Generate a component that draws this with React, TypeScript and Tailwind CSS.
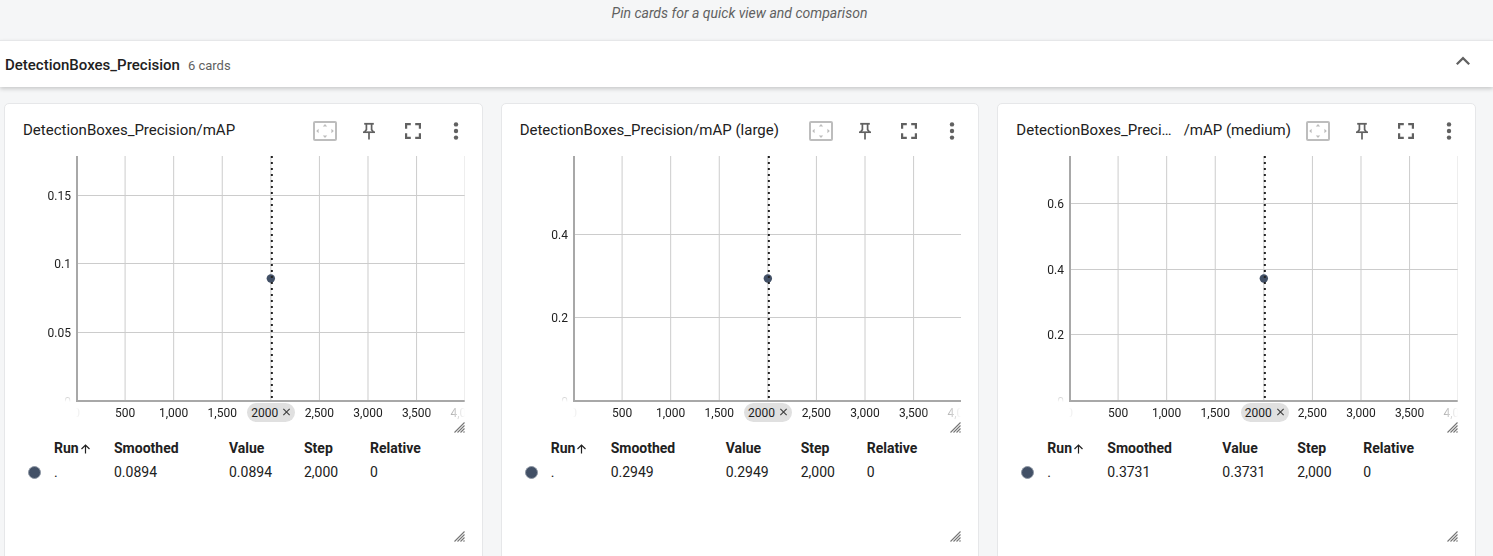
import React from "react";
import clsx from "clsx";

type Tick = { label: string; y: number };
type Card = { id: string; title: string; tail: string; value: string; ticks: Tick[]; compactTitle?: boolean };

const PLOT_HEIGHT = 246;
const POINT_Y = 123;

const CARDS: Card[] = [
  {
    id: "map",
    title: "DetectionBoxes_Precision",
    tail: "/mAP",
    value: "0.0894",
    ticks: [
      { label: "0.15", y: 39 },
      { label: "0.1", y: 107 },
      { label: "0.05", y: 176 },
    ],
  },
  {
    id: "map-large",
    title: "DetectionBoxes_Precision",
    tail: "/mAP (large)",
    value: "0.2949",
    ticks: [
      { label: "0.4", y: 78 },
      { label: "0.2", y: 161 },
    ],
  },
  {
    id: "map-medium",
    title: "DetectionBoxes_Precision",
    tail: "/mAP (medium)",
    value: "0.3731",
    compactTitle: true,
    ticks: [
      { label: "0.6", y: 47 },
      { label: "0.4", y: 113 },
      { label: "0.2", y: 178 },
    ],
  },
];

const STEPS = ["0", "500", "1,000", "1,500", "", "2,500", "3,000", "3,500", "4,000"];

function FitIcon() {
  return (
    <svg width="24" height="20" viewBox="0 0 24 20" aria-hidden="true">
      <rect x="1" y="1" width="22" height="18" rx="1" fill="none" stroke="#bdbdbd" strokeWidth="2" />
      <path d="M12 3l2.2 2.6H9.8zM12 17l2.2-2.6H9.8zM3.2 10l2.4-2.2v4.4zM20.8 10l-2.4-2.2v4.4z" fill="#bdbdbd" />
    </svg>
  );
}

function PinIcon() {
  return (
    <svg width="24" height="24" viewBox="0 0 24 24" fill="none" stroke="#616161" aria-hidden="true">
      <path d="M7.2 4.8h9.6" strokeWidth="1.8" />
      <path d="M9.4 5v5.6L7.6 12.9M14.6 5v5.6l1.8 2.3" strokeWidth="1.7" />
      <path d="M6 13.2h12" strokeWidth="1.7" />
      <path d="M12 13.5V20.6" strokeWidth="1.7" />
    </svg>
  );
}

function FullscreenIcon() {
  return (
    <svg width="24" height="24" viewBox="0 0 24 24" fill="none" stroke="#616161" strokeWidth="2.2" aria-hidden="true">
      <path d="M5.1 9.8V5.1h4.7M14.2 5.1h4.7v4.7M18.9 14.2v4.7h-4.7M9.8 18.9H5.1v-4.7" />
    </svg>
  );
}

function MoreIcon() {
  return (
    <svg width="24" height="24" viewBox="0 0 24 24" fill="#616161" aria-hidden="true">
      <circle cx="11" cy="5.4" r="2.2" />
      <circle cx="11" cy="12" r="2.2" />
      <circle cx="11" cy="18.6" r="2.2" />
    </svg>
  );
}

function GripIcon() {
  return (
    <svg width="11" height="11" viewBox="0 0 11 11" stroke="#757575" strokeWidth="1.1" aria-hidden="true">
      <path d="M0.5 10.5l10-10M3.5 10.5l7-7M6.5 10.5l4-4M9.5 10.5l1-1" />
    </svg>
  );
}

function Chart({ card }: { card: Card }) {
  return (
    <div className="flex">
      <div className="w-[53px] shrink-0">
        <svg
          width="100%"
          height={PLOT_HEIGHT}
          className="block [mask-image:linear-gradient(to_bottom,transparent,black_10%,black_90%,transparent)]"
          fontSize="12"
          fill="#212121"
        >
          {[...card.ticks, { label: "0", y: 245 }].map((t) => (
            <text key={t.label} x="48" y={t.y + 5} textAnchor="end">
              {t.label}
            </text>
          ))}
        </svg>
      </div>
      <div className="relative min-w-0 flex-1">
        <svg width="100%" height={PLOT_HEIGHT} className="block">
          {card.ticks.map((t) => (
            <line key={t.label} x1="0" x2="100%" y1={t.y + 0.5} y2={t.y + 0.5} stroke="#cccccc" />
          ))}
          <svg x="0.5" overflow="visible">
            {STEPS.map((_, i) => (
              <line key={i} x1={`${i * 12.5}%`} x2={`${i * 12.5}%`} y1="0" y2={PLOT_HEIGHT} stroke="#cccccc" />
            ))}
          </svg>
          <line x1="1" x2="1" y1="0" y2={PLOT_HEIGHT} stroke="#a8a8a8" strokeWidth="2" />
          <line x1="0" x2="100%" y1="245" y2="245" stroke="#a8a8a8" strokeWidth="2" />
          <svg x="50%" overflow="visible">
            <circle cx="0.5" cy={POINT_Y - 0.5} r="4.2" fill="#425066" />
            <line x1="1.5" x2="1.5" y1="0" y2="244" stroke="#212121" strokeWidth="2" strokeDasharray="2 4" />
          </svg>
        </svg>
        <svg
          width="100%"
          height="20"
          className="block [mask-image:linear-gradient(to_right,transparent,black_10%,black_90%,transparent)]"
          fontSize="12"
          fill="#212121"
        >
          <svg x="0.5" overflow="visible">
            {STEPS.map((label, i) => (
              <text key={i} x={`${i * 12.5}%`} y="15" textAnchor="middle">
                {label}
              </text>
            ))}
          </svg>
        </svg>
        <button
          type="button"
          aria-label="Remove step 2000"
          className="absolute bottom-0 left-1/2 -ml-[23px] flex h-[19px] w-12 items-center justify-center gap-1 rounded-full bg-[#e0e0e0] text-xs text-[#212121]"
        >
          2000
          <svg width="9" height="9" viewBox="0 0 10 10" stroke="#424242" strokeWidth="1.3" aria-hidden="true">
            <path d="M1.5 1l7 7M8.5 1l-7 7" />
          </svg>
        </button>
      </div>
    </div>
  );
}

function ScalarCard({ card }: { card: Card }) {
  return (
    <section className="min-w-0 rounded-[5px] border border-[#e6e7e9] bg-white pt-2 pr-[17px] pb-8 pl-[18px]">
      <div className="flex h-9 items-center">
        <h3 className={clsx("flex min-w-0 flex-1 pr-[15px] text-[15px] leading-5", card.compactTitle && "justify-between")}>
          <span className={clsx("truncate", card.compactTitle && "max-w-[160px]")}>{card.title}</span>
          <span className="shrink-0 whitespace-nowrap">{card.tail}</span>
        </h3>
        <div className="-mr-1 flex shrink-0 gap-5 pt-[2px]">
          <button type="button" disabled aria-label="Fit line domains to data" className="flex h-6 w-6 items-center justify-center">
            <FitIcon />
          </button>
          <button type="button" aria-label="Pin card" className="h-6 w-6">
            <PinIcon />
          </button>
          <button type="button" aria-label="Toggle full size mode" className="h-6 w-6">
            <FullscreenIcon />
          </button>
          <button type="button" aria-label="More line chart options" className="h-6 w-6">
            <MoreIcon />
          </button>
        </div>
      </div>
      <div className="pt-2">
        <Chart card={card} />
      </div>
      <div className="flex h-2 items-start justify-end">
        <GripIcon />
      </div>
      <table className="mt-[6px] table-fixed border-collapse text-left text-sm leading-6">
        <thead>
          <tr>
            <th className="w-[31px] p-0">
              <span className="sr-only">Color</span>
            </th>
            <th className="w-[60px] p-0 font-bold">
              <span className="flex items-center">
                Run
                <svg width="12" height="12" viewBox="0 0 12 12" fill="none" stroke="#212121" strokeWidth="1.2" aria-hidden="true">
                  <path d="M6.5 11.5v-8.5M2.5 7l4-4 4 4" />
                </svg>
              </span>
            </th>
            <th className="w-[115px] p-0 font-bold">Smoothed</th>
            <th className="w-[75px] p-0 font-bold">Value</th>
            <th className="w-[66px] p-0 font-bold">Step</th>
            <th className="p-0 font-bold">Relative</th>
          </tr>
        </thead>
        <tbody>
          <tr>
            <td className="p-0 pl-[5px]">
              <span className="block h-[13px] w-[13px] rounded-full border border-[#8d96a3] bg-[#425066]" />
            </td>
            <td className="p-0">.</td>
            <td className="p-0">{card.value}</td>
            <td className="p-0">{card.value}</td>
            <td className="p-0">2,000</td>
            <td className="p-0">0</td>
          </tr>
        </tbody>
      </table>
      <div className="mt-[47px] flex justify-end">
        <GripIcon />
      </div>
    </section>
  );
}

export default function App() {
  return (
    <main className="h-screen overflow-hidden bg-[#f5f6f7] font-['Roboto',sans-serif] text-[#212121]">
      <p className="flex h-10 items-start justify-center pt-[3px] pr-[14px] text-sm leading-5 text-[#616161] italic">
        Pin cards for a quick view and comparison
      </p>
      <header className="relative flex h-[47px] items-center justify-between border-t border-[#e6e7e9] bg-white pr-[18px] pl-[5px] shadow-[0_2px_4px_rgba(0,0,0,0.18)]">
        <div className="flex items-baseline gap-2 pt-[2px]">
          <h2 className="text-[15px] leading-5 font-medium">DetectionBoxes_Precision</h2>
          <span className="text-[13px] leading-5 text-[#616161]">6 cards</span>
        </div>
        <button type="button" aria-label="Collapse group" className="h-6 w-6">
          <svg width="24" height="24" viewBox="0 0 24 24" fill="#616161" aria-hidden="true">
            <path d="M12 4.5l-7 7 1.6 1.6L12 7.7l5.4 5.4L19 11.5z" />
          </svg>
        </button>
      </header>
      <div className="grid grid-cols-3 gap-[18px] pt-4 pr-[17px] pl-1">
        {CARDS.map((card) => (
          <ScalarCard key={card.id} card={card} />
        ))}
      </div>
    </main>
  );
}
